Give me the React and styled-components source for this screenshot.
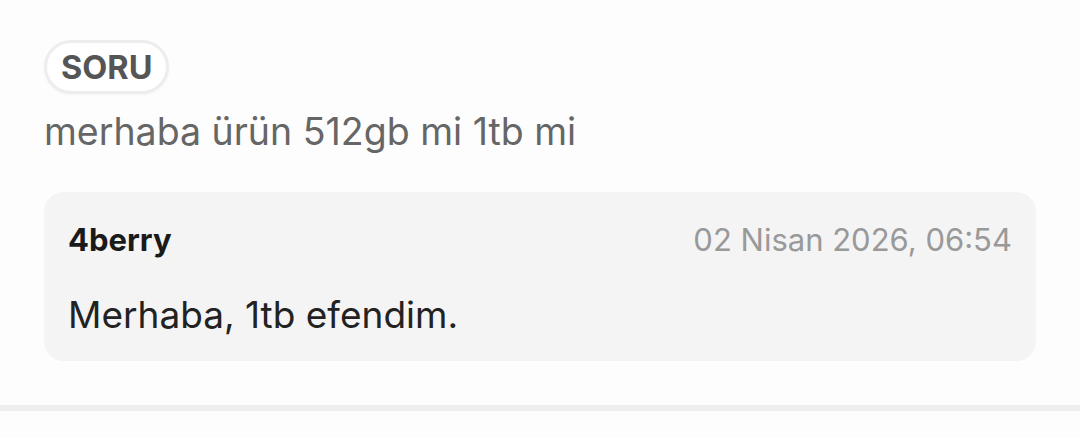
import React from "react";
import styled, { createGlobalStyle } from "styled-components";

const GlobalStyle = createGlobalStyle`
  body {
    margin: 0;
    background: #fdfdfd;
    font-family: Inter, "Noto Sans", sans-serif;
  }
`;

const Page = styled.div`
  display: flex;
  flex-direction: column;
  min-height: 438px;
`;

const Item = styled.section`
  display: flex;
  flex-direction: column;
  align-items: flex-start;
  padding: 40px 44px 44px;
  border-bottom: 6px solid #eeeeee;
`;

const Badge = styled.span`
  display: inline-flex;
  align-items: center;
  justify-content: center;
  box-sizing: border-box;
  height: 54px;
  padding: 0 14px;
  border: 3px solid #ededed;
  border-radius: 27px;
  background: #fff;
  box-shadow: 0 1px 3px rgba(0, 0, 0, 0.04);
  color: #555;
  font-size: 32.5px;
  font-weight: 700;
`;

const Question = styled.p`
  margin: 14px 0 0;
  color: #666;
  font-size: 37.5px;
  line-height: 48px;
`;

const Answer = styled.div`
  align-self: stretch;
  margin-top: 36px;
  padding: 29px 24px 23px;
  background: #f4f4f4;
  border-radius: 20px;
`;

const AnswerHead = styled.div`
  display: flex;
  justify-content: space-between;
  align-items: baseline;
  line-height: 38px;
`;

const Author = styled.span`
  color: #1a1a1a;
  font-size: 31px;
  font-weight: 700;
`;

const Date = styled.span`
  color: #999;
  font-size: 31px;
`;

const AnswerText = styled.p`
  margin: 33px 0 0;
  color: #222;
  font-size: 37px;
  line-height: 46px;
`;

export default function App() {
  return (
    <Page>
      <GlobalStyle />
      <Item>
        <Badge>SORU</Badge>
        <Question>merhaba ürün 512gb mi 1tb mi</Question>
        <Answer>
          <AnswerHead>
            <Author>4berry</Author>
            <Date>02 Nisan 2026, 06:54</Date>
          </AnswerHead>
          <AnswerText>Merhaba, 1tb efendim.</AnswerText>
        </Answer>
      </Item>
    </Page>
  );
}
